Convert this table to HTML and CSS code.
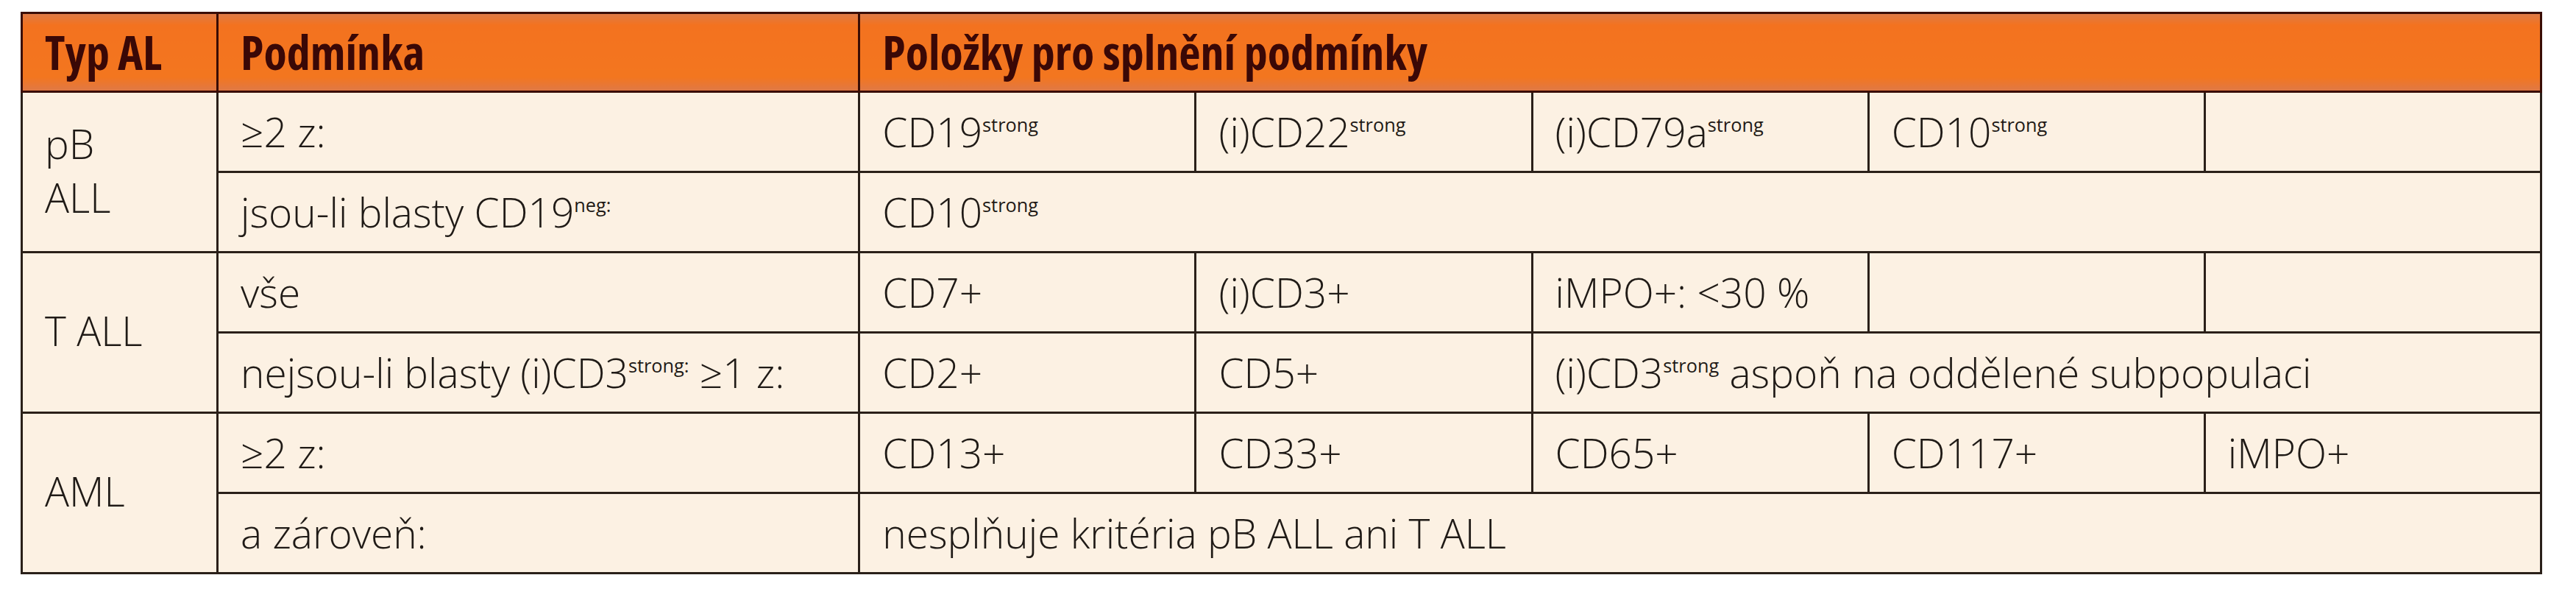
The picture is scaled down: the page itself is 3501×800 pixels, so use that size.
FILE: index.html
```html
<!DOCTYPE html>
<html lang="cs">
<head>
<meta charset="utf-8">
<title>Typ AL</title>
<link rel="stylesheet" href="styles.css">
</head>
<body>
<table class="crit">
  <colgroup>
    <col class="c-type">
    <col class="c-cond">
    <col class="c-item">
    <col class="c-item">
    <col class="c-item">
    <col class="c-item">
    <col class="c-item">
  </colgroup>
  <thead>
    <tr class="head">
      <th>Typ AL</th>
      <th>Podmínka</th>
      <th colspan="5">Položky pro splnění podmínky</th>
    </tr>
  </thead>
  <tbody>
    <tr class="first">
      <td rowspan="2" class="type">pB<br>ALL</td>
      <td>≥2 z:</td>
      <td>CD19<sup>strong</sup></td>
      <td>(i)CD22<sup>strong</sup></td>
      <td>(i)CD79a<sup>strong</sup></td>
      <td>CD10<sup>strong</sup></td>
      <td></td>
    </tr>
    <tr>
      <td>jsou-li blasty CD19<sup>neg:</sup></td>
      <td colspan="5">CD10<sup>strong</sup></td>
    </tr>
    <tr class="first">
      <td rowspan="2" class="type">T ALL</td>
      <td>vše</td>
      <td>CD7+</td>
      <td>(i)CD3+</td>
      <td>iMPO+: &lt;30 %</td>
      <td></td>
      <td></td>
    </tr>
    <tr>
      <td>nejsou-li blasty (i)CD3<sup>strong:</sup> ≥1 z:</td>
      <td>CD2+</td>
      <td>CD5+</td>
      <td colspan="3">(i)CD3<sup>strong</sup> aspoň na oddělené subpopulaci</td>
    </tr>
    <tr class="first">
      <td rowspan="2" class="type">AML</td>
      <td>≥2 z:</td>
      <td>CD13+</td>
      <td>CD33+</td>
      <td>CD65+</td>
      <td>CD117+</td>
      <td>iMPO+</td>
    </tr>
    <tr>
      <td>a zároveň:</td>
      <td colspan="5">nesplňuje kritéria pB ALL ani T ALL</td>
    </tr>
  </tbody>
</table>
</body>
</html>
```

FILE: styles.css
```css
html, body {
  margin: 0;
  padding: 0;
  background: #ffffff;
}

body {
  padding: 16px 0 0 28px;
}

.crit {
  border-collapse: collapse;
  table-layout: fixed;
  width: 3427px;
  font-family: "Open Sans", "Liberation Sans", sans-serif;
  font-stretch: normal;
  font-size: 55px;
  font-weight: 300;
  color: #1f1a16;
  background: #fcf1e3;
}

.c-type { width: 266px; }
.c-cond { width: 872px; }
.c-item { width: 457px; }

.crit th,
.crit td {
  border: 3px solid #2a2019;
  padding: 0 0 0 30px;
  text-align: left;
  vertical-align: middle;
  line-height: 1.32;
  font-weight: 300;
  white-space: nowrap;
}

.crit tbody tr {
  height: 109px;
}

.crit .head {
  height: 107px;
}

.crit .head th {
  border-color: #3a0d05;
  font-size: 64px;
  font-weight: 700;
  font-stretch: 75%;
  color: #3a0806;
  background: linear-gradient(to bottom, #df7a45 0%, #f3721f 14%, #f3761f 82%, #df7846 100%);
}

.crit .type {
  padding-bottom: 4px;
}

.crit sup {
  font-size: 0.46em;
  line-height: 0;
  vertical-align: 0.85em;
  font-weight: 400;
}
```
